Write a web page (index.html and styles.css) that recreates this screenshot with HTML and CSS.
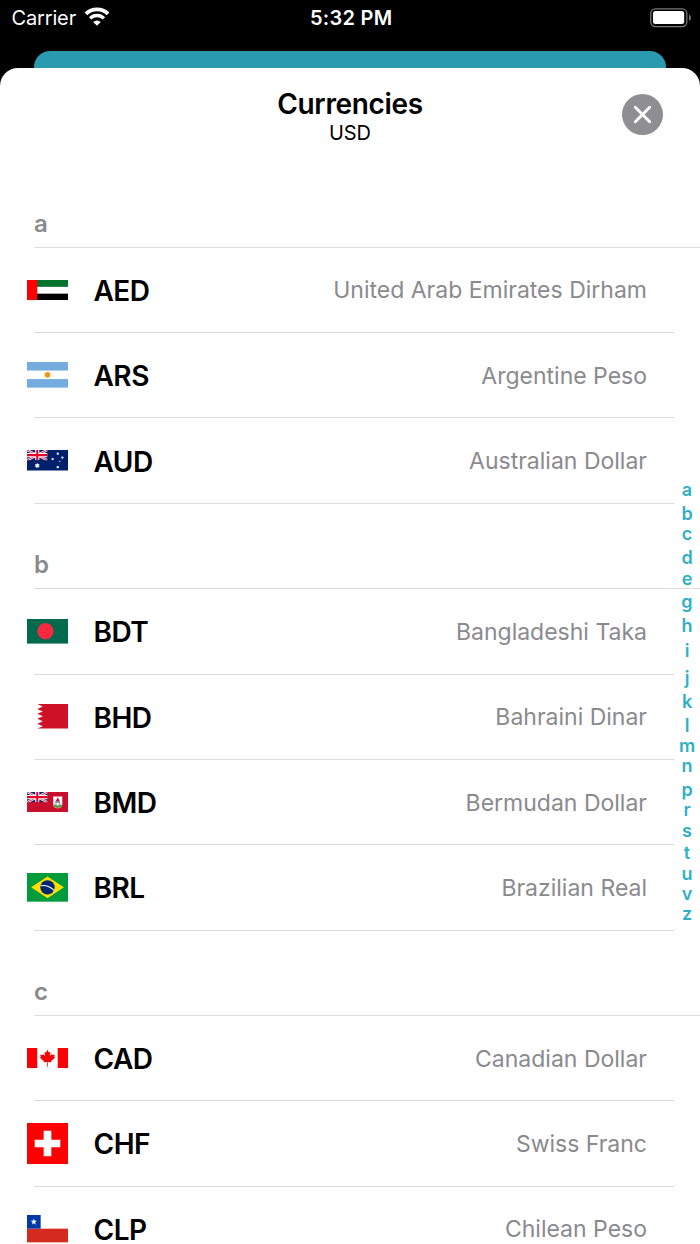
FILE: index.html
```
<!DOCTYPE html>
<html lang="en">
<head>
    <meta charset="UTF-8">
    <meta name="viewport" content="width=device-width, initial-scale=1.0">
    <title>Currencies</title>
    <link rel="stylesheet" href="styles.css">
</head>
<body>
    <!-- Shared flag parts -->
    <svg class="defs" width="0" height="0">
        <symbol id="union-jack" viewBox="0 0 60 30">
            <rect width="60" height="30" fill="#012169"/>
            <path d="M0 0L60 30M60 0L0 30" stroke="#fff" stroke-width="7"/>
            <path d="M0 0L60 30M60 0L0 30" stroke="#e4002b" stroke-width="2.4"/>
            <path d="M30 0V30M0 15H60" stroke="#fff" stroke-width="12"/>
            <path d="M30 0V30M0 15H60" stroke="#e4002b" stroke-width="6"/>
        </symbol>
    </svg>

    <div class="screen">
        <div class="status-bar">
            <div class="carrier">
                <span>Carrier</span>
                <svg class="wifi" viewBox="0 0 26 19">
                    <path d="M1.9 6.9A15.8 15.8 0 0 1 24.1 6.9" fill="none" stroke="#fff" stroke-width="3.8"/>
                    <path d="M6.1 11.4A9.8 9.8 0 0 1 19.9 11.4" fill="none" stroke="#fff" stroke-width="3.4"/>
                    <path d="M13 18.8L9.2 15A5.4 5.4 0 0 1 16.8 15Z" fill="#fff"/>
                </svg>
            </div>
            <div class="time">5:32 PM</div>
            <svg class="battery" viewBox="0 0 42 20">
                <rect x="0.8" y="0.8" width="36" height="17.8" rx="4.5" fill="none" stroke="#777" stroke-width="1.3"/>
                <rect x="3" y="3" width="31.2" height="13" rx="2.5" fill="#fff"/>
                <path d="M39 6.5Q41 7.5 41 9.7Q41 12 39 13Z" fill="#777"/>
            </svg>
        </div>

        <div class="card-behind"></div>

        <div class="sheet">
            <div class="sheet-header">
                <h1>Currencies</h1>
                <p>USD</p>
                <button class="close" aria-label="Close">
                    <svg viewBox="0 0 41 41">
                        <circle cx="20.5" cy="20.5" r="20.5" fill="#8e8e93"/>
                        <path d="M13.3 13.3L27.7 27.7M27.7 13.3L13.3 27.7" stroke="#fff" stroke-width="2.9" stroke-linecap="round"/>
                    </svg>
                </button>
            </div>

            <h2 class="section">a</h2>
            <ul>
                <li>
                    <svg class="flag" viewBox="0 0 40 20">
                        <rect width="40" height="20" fill="#fff"/>
                        <rect width="40" height="6.67" fill="#00732f"/>
                        <rect y="13.33" width="40" height="6.67" fill="#000"/>
                        <rect width="10" height="20" fill="#f00"/>
                    </svg>
                    <span class="code">AED</span>
                    <span class="name">United Arab Emirates Dirham</span>
                </li>
                <li>
                    <svg class="flag" viewBox="0 0 40 25">
                        <rect width="40" height="25" fill="#74acdf"/>
                        <rect y="8.33" width="40" height="8.33" fill="#fff"/>
                        <circle cx="20" cy="12.5" r="3.2" fill="#f6b40e" opacity="0.5"/>
                        <circle cx="20" cy="12.5" r="2.5" fill="#e39a1d"/>
                    </svg>
                    <span class="code">ARS</span>
                    <span class="name">Argentine Peso</span>
                </li>
                <li>
                    <svg class="flag" viewBox="0 0 40 20">
                        <rect width="40" height="20" fill="#00206b"/>
                        <use href="#union-jack" width="20" height="10"/>
                        <path d="M10 12.4L10.7 14L12.3 13.6L11.5 15L12.9 16L11.2 16.2L11.1 17.9L10 16.7L8.9 17.9L8.8 16.2L7.1 16L8.5 15L7.7 13.6L9.3 14Z" fill="#fff"/>
                        <g fill="#fff">
                            <circle cx="30" cy="3.6" r="1.1"/>
                            <circle cx="25" cy="8.8" r="1.1"/>
                            <circle cx="34.5" cy="7.4" r="1.1"/>
                            <circle cx="30" cy="16.7" r="1.2"/>
                            <circle cx="32" cy="11" r="0.6"/>
                        </g>
                    </svg>
                    <span class="code">AUD</span>
                    <span class="name">Australian Dollar</span>
                </li>
            </ul>

            <h2 class="section">b</h2>
            <ul>
                <li>
                    <svg class="flag" viewBox="0 0 40 24">
                        <rect width="40" height="24" fill="#006a4e"/>
                        <circle cx="18" cy="12" r="8" fill="#f42a41"/>
                    </svg>
                    <span class="code">BDT</span>
                    <span class="name">Bangladeshi Taka</span>
                </li>
                <li>
                    <svg class="flag" viewBox="0 0 40 24">
                        <rect width="40" height="24" fill="#fff"/>
                        <path d="M40 0H10L15.5 2.4L10 4.8L15.5 7.2L10 9.6L15.5 12L10 14.4L15.5 16.8L10 19.2L15.5 21.6L10 24H40Z" fill="#ce1126"/>
                    </svg>
                    <span class="code">BHD</span>
                    <span class="name">Bahraini Dinar</span>
                </li>
                <li>
                    <svg class="flag" viewBox="0 0 40 20">
                        <rect width="40" height="20" fill="#c8102e"/>
                        <use href="#union-jack" width="20" height="10"/>
                        <path d="M25.6 4.4H34.4V12Q34.4 15.6 30 15.9Q25.6 15.6 25.6 12Z" fill="#fff"/>
                        <path d="M25.8 12.2H34.2Q34 15.4 30 15.7Q26 15.4 25.8 12.2Z" fill="#5b9a3c"/>
                        <path d="M30 5L31.7 8.6L32.4 11H27.6L28.3 8.6Z" fill="#c8102e"/>
                        <path d="M28 8.8H32V12L30 13.8L28 12Z" fill="#8391a8"/>
                        <circle cx="30" cy="11.8" r="1.4" fill="#fff"/>
                    </svg>
                    <span class="code">BMD</span>
                    <span class="name">Bermudan Dollar</span>
                </li>
                <li>
                    <svg class="flag" viewBox="0 0 40 28">
                        <rect width="40" height="28" fill="#009b3a"/>
                        <path d="M20 3.4L36 14L20 24.6L4 14Z" fill="#fedf00"/>
                        <circle cx="20" cy="14" r="7" fill="#002776"/>
                        <path d="M13.3 12.4Q21 11.5 26.4 17" fill="none" stroke="#fff" stroke-width="1"/>
                    </svg>
                    <span class="code">BRL</span>
                    <span class="name">Brazilian Real</span>
                </li>
            </ul>

            <h2 class="section">c</h2>
            <ul>
                <li>
                    <svg class="flag" viewBox="0 0 40 20">
                        <rect width="40" height="20" fill="#fff"/>
                        <rect width="10" height="20" fill="#f00"/>
                        <rect x="30" width="10" height="20" fill="#f00"/>
                        <path d="M20 1.8L21.4 4.4L22.9 3.7L22.3 7.9L24.3 5.9L24.8 6.9L27.2 6.5L26.5 8.9L27.4 9.5L23.6 12.7L23.9 14L20.3 13.6L20.4 18.2H19.6L19.7 13.6L16.1 14L16.4 12.7L12.6 9.5L13.5 8.9L12.8 6.5L15.2 6.9L15.7 5.9L17.7 7.9L17.1 3.7L18.6 4.4Z" fill="#f00"/>
                    </svg>
                    <span class="code">CAD</span>
                    <span class="name">Canadian Dollar</span>
                </li>
                <li>
                    <svg class="flag" viewBox="0 0 32 32">
                        <rect width="32" height="32" fill="#f00"/>
                        <path d="M13 6H19V13H26V19H19V26H13V19H6V13H13Z" fill="#fff"/>
                    </svg>
                    <span class="code">CHF</span>
                    <span class="name">Swiss Franc</span>
                </li>
                <li>
                    <svg class="flag" viewBox="0 0 42 28">
                        <rect width="42" height="28" fill="#fff"/>
                        <rect y="14" width="42" height="14" fill="#d52b1e"/>
                        <rect width="14" height="14" fill="#0039a6"/>
                        <path d="M7 3.6L7.8 6H10.3L8.3 7.5L9.1 10L7 8.5L4.9 10L5.7 7.5L3.7 6H6.2Z" fill="#fff"/>
                    </svg>
                    <span class="code">CLP</span>
                    <span class="name">Chilean Peso</span>
                </li>
            </ul>
        </div>

        <!-- Alphabet index, floats over the list -->
        <div class="index">
            <span>a</span>
            <span class="tall">b</span>
            <span>c</span>
            <span class="tall">d</span>
            <span>e</span>
            <span class="low">g</span>
            <span class="tall">h</span>
            <span class="tall">i</span>
            <span class="tall low">j</span>
            <span class="tall">k</span>
            <span class="tall">l</span>
            <span>m</span>
            <span>n</span>
            <span class="low">p</span>
            <span>r</span>
            <span>s</span>
            <span class="mid">t</span>
            <span>u</span>
            <span>v</span>
            <span>z</span>
        </div>
    </div>
</body>
</html>
```
FILE: styles.css
```
body {
    margin: 0;
    background-color: #000;
    font-family: Inter, "Liberation Sans", sans-serif;
}
.defs {
    position: absolute;
}
.screen {
    position: relative;
    height: 1244px;
    overflow: hidden;
    background-color: #000;
}
.status-bar {
    display: grid;
    grid-template-columns: 1fr auto 1fr;
    align-items: center;
    height: 35px;
    padding: 0 9px 0 11.5px;
    margin-bottom: 16px;
    color: #fff;
    font-size: 20px;
}
.carrier {
    display: flex;
    align-items: center;
    gap: 8px;
    letter-spacing: -0.15px;
}
.wifi {
    width: 26px;
    height: 19px;
    margin-top: -2px;
}
.time {
    font-weight: 600;
    letter-spacing: 0.3px;
}
.battery {
    width: 42px;
    height: 20px;
    justify-self: end;
    margin-right: -1px;
}
.card-behind {
    height: 17px;
    margin: 0 34px;
    border-radius: 16px 16px 0 0;
    background-color: #2a9ab0;
}
.sheet {
    border-radius: 18px 18px 0 0;
    background-color: #fff;
}
.sheet-header {
    position: relative;
    height: 94.35px;
    text-align: center;
}
.sheet-header h1 {
    margin: 0;
    padding-top: 19px;
    font-size: 28px;
    line-height: 34px;
    font-weight: 600;
    letter-spacing: -0.35px;
}
.sheet-header p {
    margin: 0;
    font-size: 20px;
    line-height: 24px;
    letter-spacing: -0.1px;
}
.close {
    position: absolute;
    top: 25.5px;
    right: 37.5px;
    width: 41px;
    height: 41px;
    padding: 0;
    border: none;
    background: none;
}
.close svg {
    display: block;
}
.section {
    box-sizing: border-box;
    height: 85.37px;
    margin: 0 0 0 34px;
    padding-top: 45.5px;
    border-bottom: 1px solid #dcdcde;
    color: #8a8a8e;
    font-size: 24px;
    line-height: 32px;
    font-weight: 600;
}
ul {
    margin: 0 26px 0 34px;
    padding: 0;
    list-style: none;
}
li {
    display: flex;
    align-items: center;
    box-sizing: border-box;
    height: 85.37px;
    padding-right: 27px;
    border-bottom: 1px solid #dcdcde;
}
.flag {
    width: 41px;
    margin: 0 25.5px 0 -7px;
}
.code {
    padding-top: 2px;
    font-size: 28px;
    font-weight: 600;
    letter-spacing: -0.5px;
}
.name {
    margin-left: auto;
    padding-top: 1px;
    color: #8a8a8e;
    font-size: 23px;
}
.index {
    position: absolute;
    top: 480px;
    right: 0;
    display: flex;
    flex-direction: column;
    width: 26px;
    color: #30b0c7;
    font-size: 18px;
    font-weight: 600;
    text-align: center;
}
.index span {
    height: 20.3px;
    line-height: 20.3px;
}
.index .mid {
    padding-top: 2.5px;
}
.index .tall {
    padding-top: 3.8px;
}
.index .low {
    padding-top: 3.3px;
}
.index .tall.low {
    padding-top: 6.8px;
}
```
